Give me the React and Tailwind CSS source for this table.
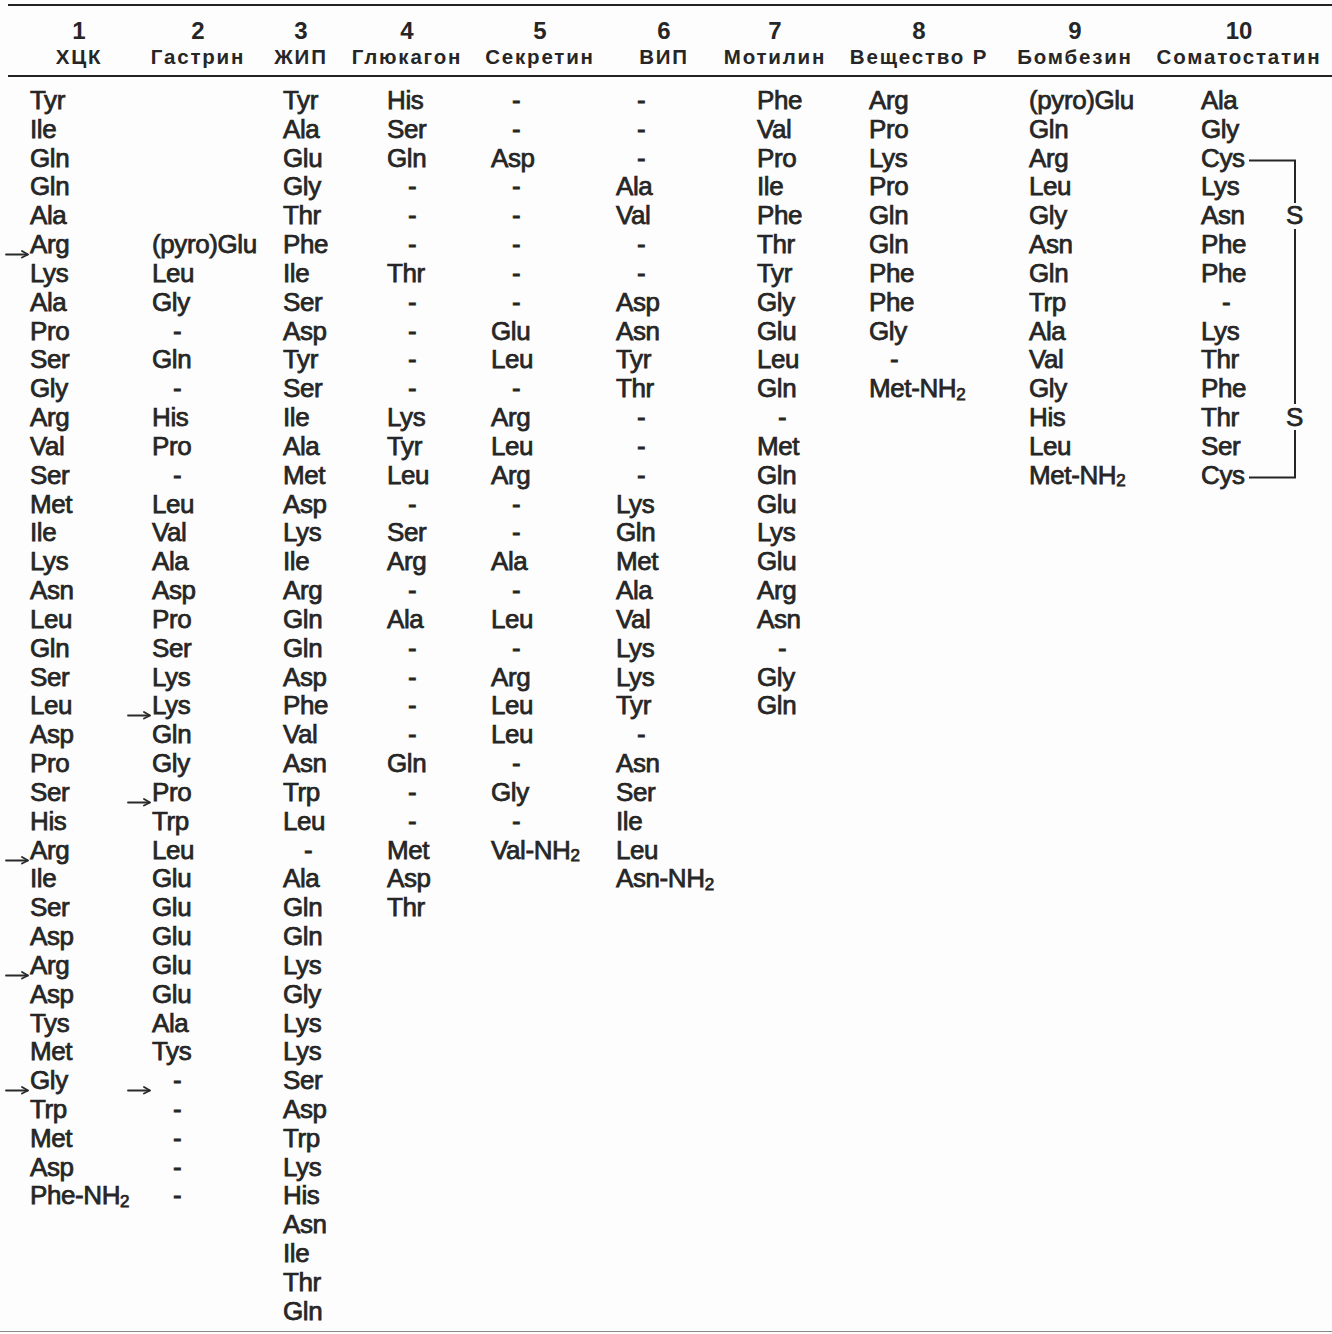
const heads = [
  { n: '1', name: 'ХЦК', w: 'w-[122px]' },
  { n: '2', name: 'Гастрин', w: 'w-[116px]' },
  { n: '3', name: 'ЖИП', w: 'w-[90px]' },
  { n: '4', name: 'Глюкагон', w: 'w-[122px]' },
  { n: '5', name: 'Секретин', w: 'w-[144px]' },
  { n: '6', name: 'ВИП', w: 'w-[104px]' },
  { n: '7', name: 'Мотилин', w: 'w-[118px]' },
  { n: '8', name: 'Вещество Р', w: 'w-[170px]' },
  { n: '9', name: 'Бомбезин', w: 'w-[142px]' },
  { n: '10', name: 'Соматостатин', w: 'w-[186px]' },
];

// ">" in front = arrow (cleavage site), "" = empty row
const columns = [
  {
    w: 'w-[122px]',
    rows: ['Tyr', 'Ile', 'Gln', 'Gln', 'Ala', '>Arg', 'Lys', 'Ala', 'Pro', 'Ser', 'Gly', 'Arg', 'Val', 'Ser', 'Met', 'Ile', 'Lys', 'Asn', 'Leu', 'Gln', 'Ser', 'Leu', 'Asp', 'Pro', 'Ser', 'His', '>Arg', 'Ile', 'Ser', 'Asp', '>Arg', 'Asp', 'Tys', 'Met', '>Gly', 'Trp', 'Met', 'Asp', 'Phe-NH2'],
  },
  {
    w: 'w-[131px]',
    rows: ['', '', '', '', '', '(pyro)Glu', 'Leu', 'Gly', '-', 'Gln', '-', 'His', 'Pro', '-', 'Leu', 'Val', 'Ala', 'Asp', 'Pro', 'Ser', 'Lys', '>Lys', 'Gln', 'Gly', '>Pro', 'Trp', 'Leu', 'Glu', 'Glu', 'Glu', 'Glu', 'Glu', 'Ala', 'Tys', '>-', '-', '-', '-', '-'],
  },
  {
    w: 'w-[104px]',
    rows: ['Tyr', 'Ala', 'Glu', 'Gly', 'Thr', 'Phe', 'Ile', 'Ser', 'Asp', 'Tyr', 'Ser', 'Ile', 'Ala', 'Met', 'Asp', 'Lys', 'Ile', 'Arg', 'Gln', 'Gln', 'Asp', 'Phe', 'Val', 'Asn', 'Trp', 'Leu', '-', 'Ala', 'Gln', 'Gln', 'Lys', 'Gly', 'Lys', 'Lys', 'Ser', 'Asp', 'Trp', 'Lys', 'His', 'Asn', 'Ile', 'Thr', 'Gln'],
  },
  {
    w: 'w-[104px]',
    rows: ['His', 'Ser', 'Gln', '-', '-', '-', 'Thr', '-', '-', '-', '-', 'Lys', 'Tyr', 'Leu', '-', 'Ser', 'Arg', '-', 'Ala', '-', '-', '-', '-', 'Gln', '-', '-', 'Met', 'Asp', 'Thr'],
  },
  {
    w: 'w-[125px]',
    rows: ['-', '-', 'Asp', '-', '-', '-', '-', '-', 'Glu', 'Leu', '-', 'Arg', 'Leu', 'Arg', '-', '-', 'Ala', '-', 'Leu', '-', 'Arg', 'Leu', 'Leu', '-', 'Gly', '-', 'Val-NH2'],
  },
  {
    w: 'w-[141px]',
    rows: ['-', '-', '-', 'Ala', 'Val', '-', '-', 'Asp', 'Asn', 'Tyr', 'Thr', '-', '-', '-', 'Lys', 'Gln', 'Met', 'Ala', 'Val', 'Lys', 'Lys', 'Tyr', '-', 'Asn', 'Ser', 'Ile', 'Leu', 'Asn-NH2'],
  },
  {
    w: 'w-[112px]',
    rows: ['Phe', 'Val', 'Pro', 'Ile', 'Phe', 'Thr', 'Tyr', 'Gly', 'Glu', 'Leu', 'Gln', '-', 'Met', 'Gln', 'Glu', 'Lys', 'Glu', 'Arg', 'Asn', '-', 'Gly', 'Gln'],
  },
  {
    w: 'w-[160px]',
    rows: ['Arg', 'Pro', 'Lys', 'Pro', 'Gln', 'Gln', 'Phe', 'Phe', 'Gly', '-', 'Met-NH2'],
  },
  {
    w: 'w-[172px]',
    rows: ['(pyro)Glu', 'Gln', 'Arg', 'Leu', 'Gly', 'Asn', 'Gln', 'Trp', 'Ala', 'Val', 'Gly', 'His', 'Leu', 'Met-NH2'],
  },
];

const somatostatin = ['Ala', 'Gly', 'Cys', 'Lys', 'Asn', 'Phe', 'Phe', '-', 'Lys', 'Thr', 'Phe', 'Thr', 'Ser', 'Cys'];

const Arrow = () => (
  <svg
    className="absolute right-full top-[19px] mr-[1px]"
    width="24"
    height="10"
    viewBox="0 0 24 10"
    fill="none"
    stroke="#2a2a2a"
    strokeWidth="1.8"
    strokeLinecap="round"
    strokeLinejoin="round"
  >
    <path d="M1 5.5H22.5" />
    <path d="M17 2L23 5.5L17 8.5" />
  </svg>
);

const Residue = ({ value }) => {
  if (!value) return <div className="h-[28.83px]" />;
  const arrow = value.startsWith('>');
  const text = arrow ? value.slice(1) : value;
  const amide = text.endsWith('NH2');
  return (
    <div className="relative h-[28.83px] leading-[28.83px] whitespace-nowrap">
      {arrow && <Arrow />}
      <span className={text === '-' ? 'ml-[21px]' : ''}>
        {amide ? (
          <>
            {text.slice(0, -1)}
            <sub className="text-[17px] bottom-[-0.15em]">2</sub>
          </>
        ) : (
          text
        )}
      </span>
    </div>
  );
};

export default function App() {
  return (
    <div className="w-[1332px] h-[1334px] overflow-hidden bg-[#fdfdfd] text-[#262626] font-['Liberation_Sans',Arial,sans-serif]">
      {/* header */}
      <div className="mt-[4px] ml-[8px] border-t-2 border-b-[2px] border-[#222] pt-[12px] pb-[6px]">
        <div className="flex pl-[10px]">
          {heads.map((h) => (
            <div key={h.n} className={`${h.w} shrink-0 text-center`}>
              <div className="text-[24px] font-bold leading-[25px]">{h.n}</div>
              <div className="mt-[2px] text-[20.5px] font-bold leading-[24px] tracking-[1.8px] whitespace-nowrap">
                {h.name}
              </div>
            </div>
          ))}
        </div>
      </div>

      {/* body */}
      <div className="border-b border-[#888] pt-[9px] pb-[5px]">
        <div className="flex pl-[30px] text-[26px] tracking-[-0.4px] [-webkit-text-stroke:0.75px_#262626]">
          {columns.map((c, i) => (
            <div key={i} className={`${c.w} shrink-0 flex flex-col`}>
              {c.rows.map((r, j) => (
                <Residue key={j} value={r} />
              ))}
            </div>
          ))}

          <div className="relative w-[131px] shrink-0 flex flex-col">
            {somatostatin.map((r, j) => (
              <Residue key={j} value={r} />
            ))}
            <svg
              className="absolute left-0 top-0 pointer-events-none"
              width="131"
              height="420"
              viewBox="0 0 131 420"
              fill="none"
              stroke="#262626"
              strokeWidth="2"
            >
              <path d="M48 74.5H94V117" />
              <path d="M94 143V318" />
              <path d="M94 344V391.5H48" />
            </svg>
            <span className="absolute left-[85px] top-[115.3px] h-[28.83px] leading-[28.83px]">S</span>
            <span className="absolute left-[85px] top-[317.1px] h-[28.83px] leading-[28.83px]">S</span>
          </div>
        </div>
      </div>
    </div>
  );
}
